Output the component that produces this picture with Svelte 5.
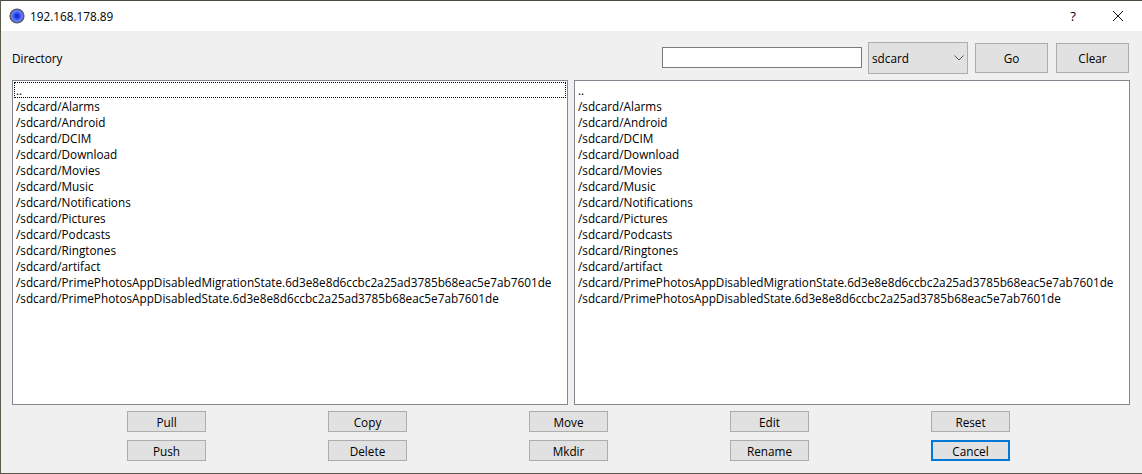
<script>
  const items = ['/sdcard/Alarms','/sdcard/Android','/sdcard/DCIM','/sdcard/Download','/sdcard/Movies','/sdcard/Music','/sdcard/Notifications','/sdcard/Pictures','/sdcard/Podcasts','/sdcard/Ringtones','/sdcard/artifact','/sdcard/PrimePhotosAppDisabledMigrationState.6d3e8e8d6ccbc2a25ad3785b68eac5e7ab7601de','/sdcard/PrimePhotosAppDisabledState.6d3e8e8d6ccbc2a25ad3785b68eac5e7ab7601de'];
  const actions = ['Pull','Copy','Move','Edit','Reset','Push','Delete','Mkdir','Rename','Cancel'];
</script>

<div class="window">
  <div class="strip"></div>
  <header class="titlebar">
    <svg class="appicon" width="16" height="16" viewBox="0 0 16 16">
      <defs>
        <radialGradient id="ball" cx="0.5" cy="0.5" r="0.5">
          <stop offset="0" stop-color="#1c1cdc"/>
          <stop offset="0.35" stop-color="#2c3ce8"/>
          <stop offset="0.72" stop-color="#6484f0"/>
          <stop offset="1" stop-color="#4860d0"/>
        </radialGradient>
      </defs>
      <circle cx="8" cy="8" r="7" fill="url(#ball)" stroke="#55555f" stroke-width="1.2"/>
    </svg>
    <span class="title">192.168.178.89</span>
    <span class="help">?</span>
    <svg class="close" width="12" height="12" viewBox="0 0 12 12">
      <path d="M1 1 L11 11 M11 1 L1 11" stroke="#111" stroke-width="1" fill="none"/>
    </svg>
  </header>
  <main class="content">
    <div class="toolbar">
      <span class="label">Directory</span>
      <input class="path" type="text" />
      <div class="combo"><span>sdcard</span>
        <svg width="10" height="6" viewBox="0 0 10 6"><path d="M0.5 0.5 L5 5 L9.5 0.5" stroke="#555" fill="none"/></svg>
      </div>
      <button class="tool">Go</button>
      <button class="tool clear">Clear</button>
    </div>
    <div class="lists">
      <div class="list">
        <div class="row current">..</div>
        {#each items as item}<div class="row">{item}</div>{/each}
      </div>
      <div class="list">
        <div class="row">..</div>
        {#each items as item}<div class="row">{item}</div>{/each}
      </div>
    </div>
    <div class="actions">
      {#each actions as a}
        <button class="action" class:focus={a === 'Cancel'}>{a}</button>
      {/each}
    </div>
  </main>
</div>

<style>
  :global(body) { margin: 0; background: #3a3a30; }
  .window {
    width: 1142px; height: 474px; box-sizing: border-box;
    display: flex; flex-direction: column;
    font-family: "Open Sans", "Noto Sans", sans-serif;
    font-size: 11.75px; color: #000; overflow: hidden;
    border-left: 1px solid #5c5a4c; border-bottom: 1px solid #55544a;
  }
  .strip { height: 1px; background: #4a4a40; flex: none; }
  .titlebar {
    height: 30px; flex: none; background: #fff;
    display: flex; align-items: center; padding-left: 8px;
  }
  .appicon { margin-right: 5px; }
  .title { flex: 1; }
  .help { width: 14px; text-align: center; margin-right: 32px; font-size: 13px; }
  .close { margin-right: 18px; }
  .content {
    flex: 1; background: #f0f0f0; padding: 11px 12px 0 11px;
    display: flex; flex-direction: column;
  }
  .toolbar { display: flex; align-items: center; height: 31px; margin-bottom: 7px; }
  .label { flex: 1; padding-top: 1px; }
  .path {
    width: 200px; height: 21px; box-sizing: border-box; margin: 0 6px 0 0;
    border: 1px solid #7a7a7a; background: #fff; padding: 0;
  }
  .combo {
    width: 100px; height: 32px; box-sizing: border-box;
    border: 1px solid #adadad; background: #e1e1e1;
    display: flex; align-items: center; justify-content: space-between;
    padding: 1px 3px 0; margin-right: 7px;
  }
  button {
    font: inherit; color: #000; background: #e1e1e1; border: 1px solid #adadad;
    padding: 1px 0 0; margin: 0; box-sizing: border-box;
  }
  .tool { width: 73px; height: 30px; margin-right: 8px; }
  .tool.clear { margin-right: 1px; }
  .lists { display: flex; gap: 6px; height: 325px; }
  .list {
    flex: 1; box-sizing: border-box; background: #fff; border: 1px solid #828790;
    padding: 1px; overflow: hidden;
  }
  .row { height: 16px; padding-left: 2px; line-height: 16px; white-space: nowrap; }
  .current { outline: 1px dotted #000; outline-offset: -1px; }
  .actions {
    display: grid; grid-template-columns: repeat(5, 201px); row-gap: 8px;
    justify-content: start; margin: 6px 0 0 54px;
  }
  .action { width: 79px; height: 21px; justify-self: center; }
  .action.focus { border: 2px solid #0078d7; }
</style>
